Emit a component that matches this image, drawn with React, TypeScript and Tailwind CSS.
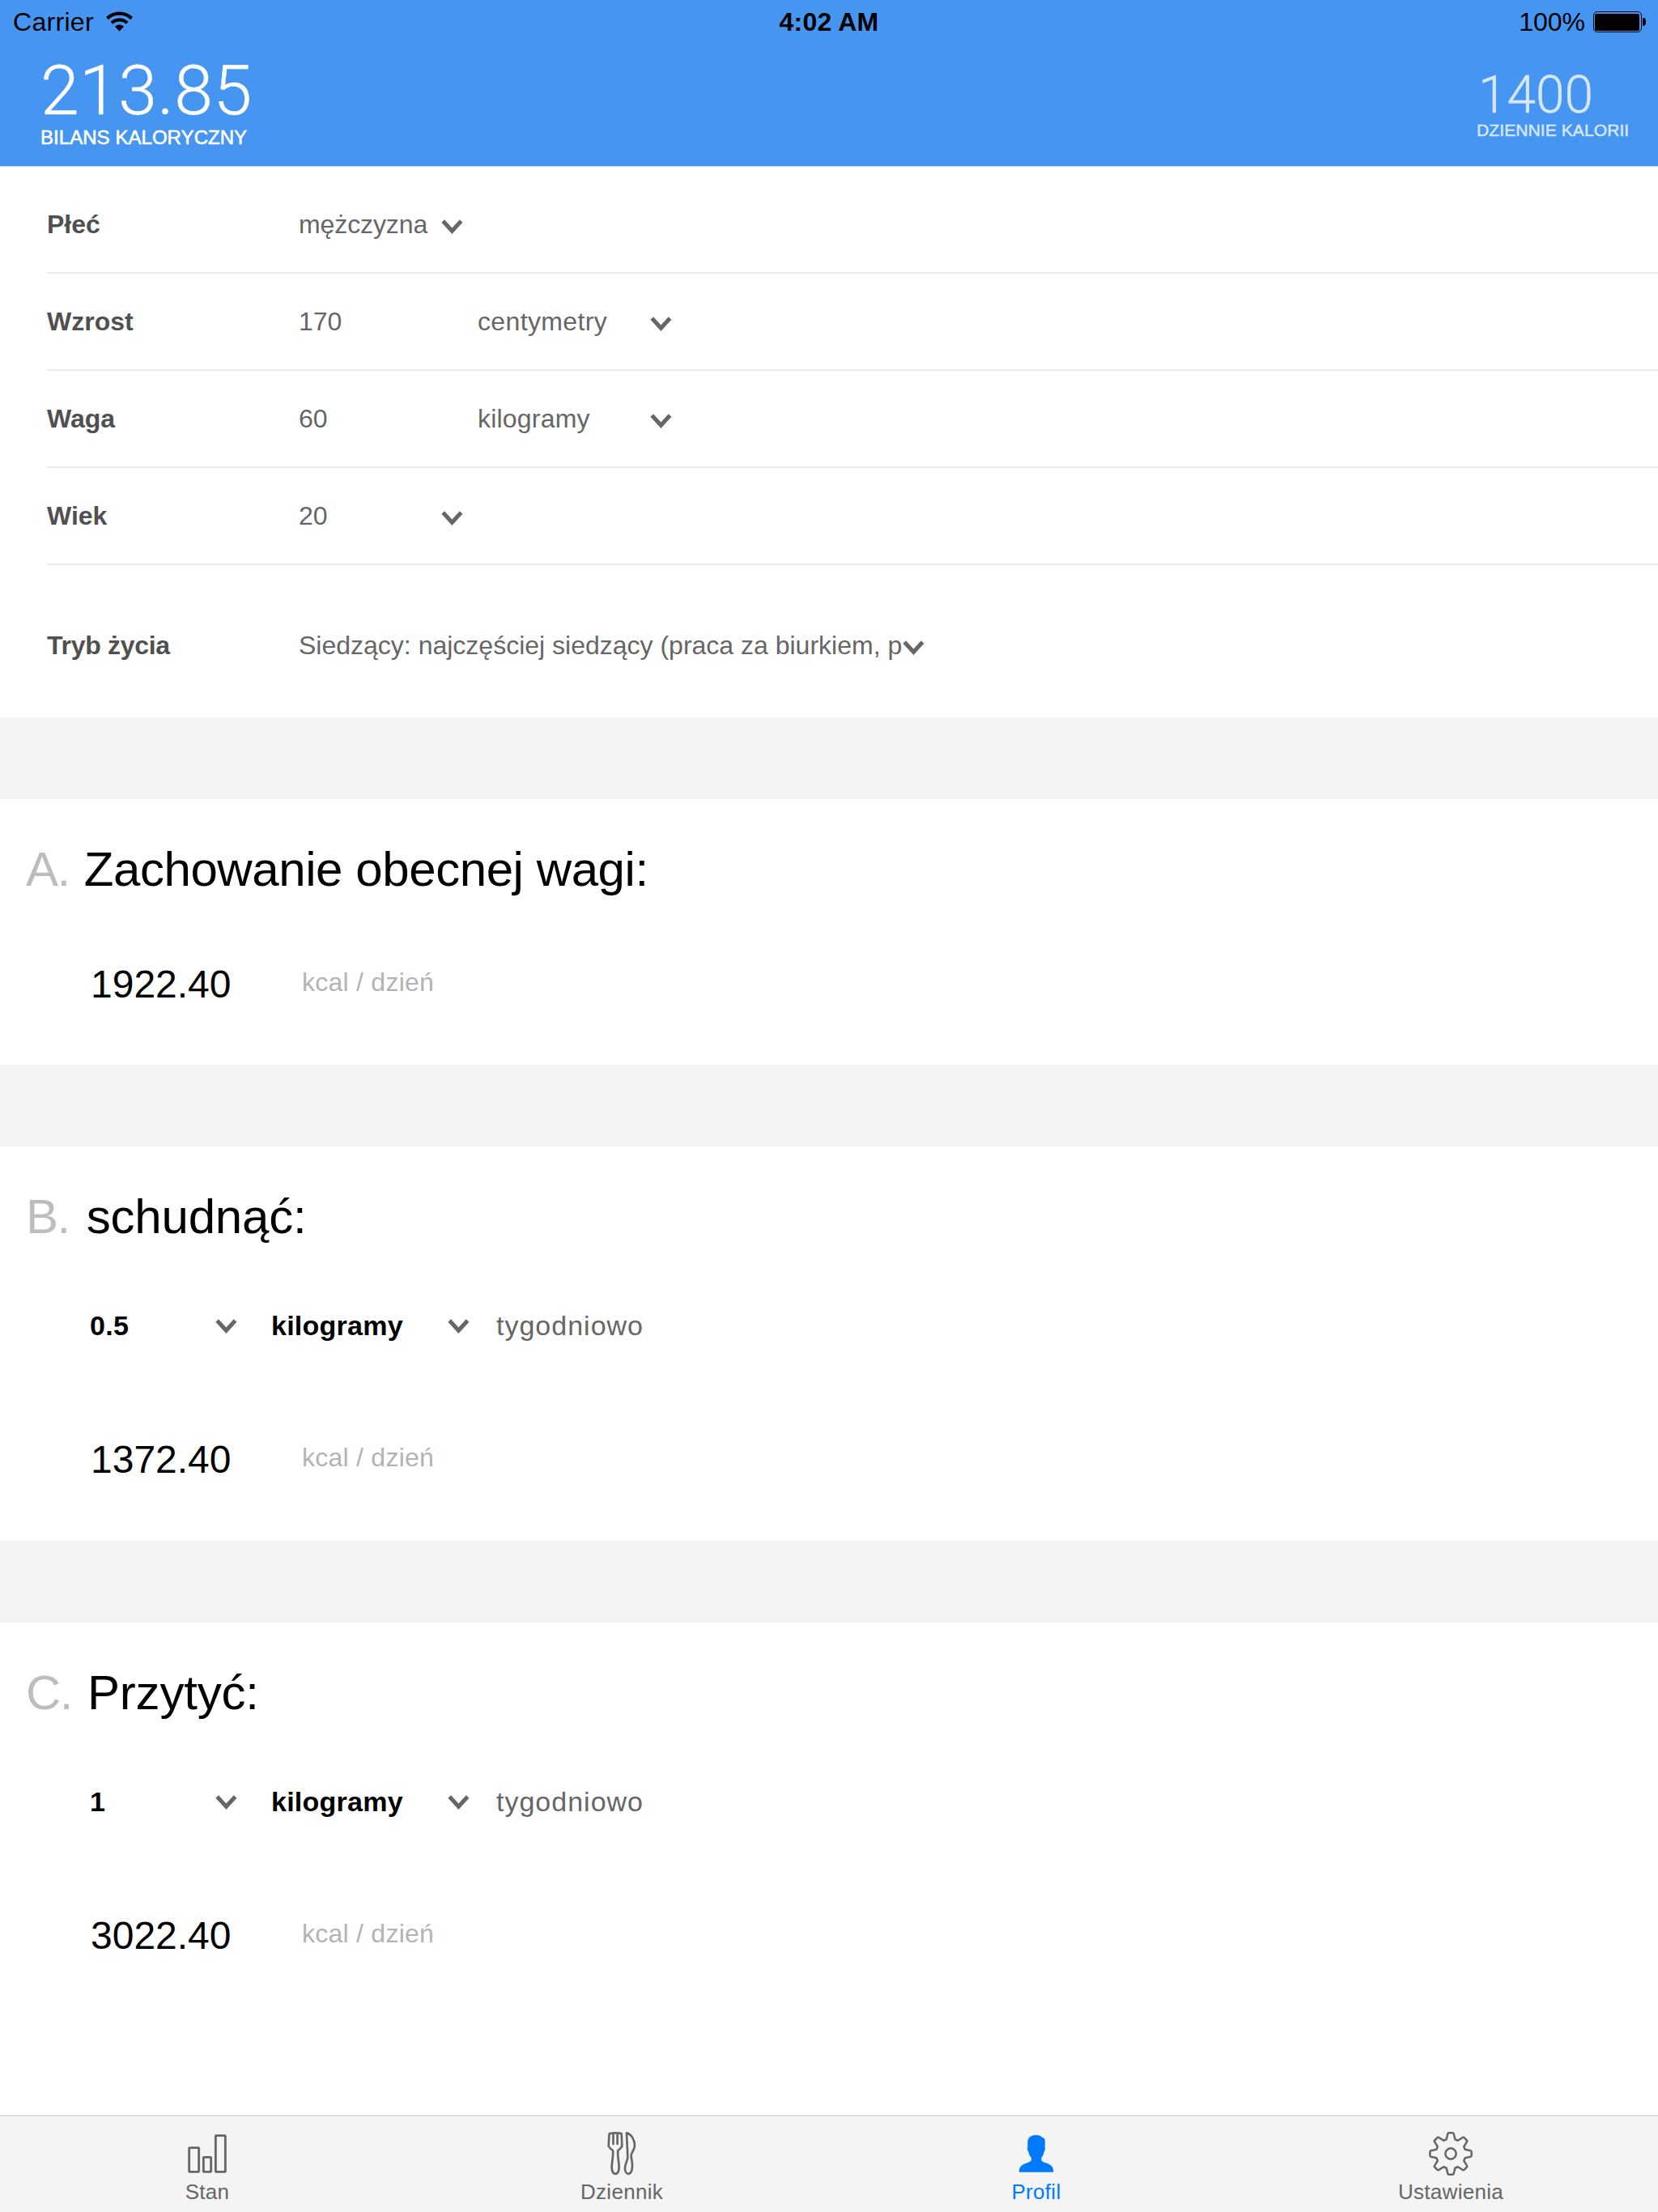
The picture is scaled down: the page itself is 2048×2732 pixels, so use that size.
import type { ReactNode } from "react";

function Chevron({ className = "mt-[14px]" }: { className?: string }) {
  return (
    <svg className={`h-[18px] w-[27px] shrink-0 ${className}`} viewBox="0 0 27 18" fill="none">
      <path d="M2.2 2 L13.4 14.2 L24.6 2" stroke="#666" strokeWidth="5" />
    </svg>
  );
}

function StatusBar() {
  return (
    <div className="flex h-[47px] justify-between pt-[7px] text-[32px] leading-[40px] text-black">
      <div className="flex w-[400px] pl-4">
        <span className="w-[115px] tracking-[0.3px]">Carrier</span>
        <svg className="mt-[7px] h-[25px] w-[33px]" viewBox="0 0 33 25">
          <g fill="none" stroke="#000" strokeWidth="4.2">
            <path d="M1.4 8.6 A22 22 0 0 1 31.6 8.6" />
            <path d="M7 14.2 A14 14 0 0 1 26 14.2" />
          </g>
          <path d="M16.5 24.5 L11 18.8 Q16.5 14.4 22 18.8 Z" />
        </svg>
      </div>
      <div className="font-bold tracking-[0.2px]">4:02 AM</div>
      <div className="flex w-[400px] justify-end pr-[15px]">
        <span>100%</span>
        <div className="mt-[7px] ml-[10px] h-[26px] w-[60px] rounded-[5px] border-[1.5px] border-black p-[1.5px]">
          <div className="h-full w-full rounded-[2px] bg-black" />
        </div>
        <div className="mt-[15px] ml-px h-[10px] w-[4px] rounded-r-full bg-black" />
      </div>
    </div>
  );
}

function Header() {
  return (
    <header className="h-[206px] border-b border-[#b9dbfb] bg-[#4595f1]">
      <StatusBar />
      <div className="flex justify-between pl-[50px] text-white">
        <div className="pt-[22px]">
          <div className="font-[Roboto,sans-serif] text-[86px] leading-[86px] font-light tracking-[0.4px] [-webkit-text-stroke:0.4px_white]">
            213.85
          </div>
          <div className="mt-px text-[24px] leading-[28px] tracking-[0.05px] [-webkit-text-stroke:0.6px_white]">
            BILANS KALORYCZNY
          </div>
        </div>
        <div className="w-[224px] pt-[39px] text-[#d6e7fc]">
          <div className="pl-[2px] font-[Roboto,sans-serif] text-[64px] leading-[64px] font-light [-webkit-text-stroke:0.4px_#d6e7fc]">
            1400
          </div>
          <div className="-mt-px text-[21px] leading-[24px] tracking-[0.1px] [-webkit-text-stroke:0.5px_#d6e7fc]">
            DZIENNIE KALORII
          </div>
        </div>
      </div>
    </header>
  );
}

function Row({ label, children, first = false }: { label: string; children: ReactNode; first?: boolean }) {
  return (
    <div className={`ml-[58px] flex items-end border-b-2 border-[#ebebeb] pb-[39px] ${first ? "h-[132px]" : "h-[120px]"}`}>
      <div className="flex">
        <div className="w-[311px] font-bold text-[#505050]">{label}</div>
        {children}
      </div>
    </div>
  );
}

function ProfileForm() {
  return (
    <section className="h-[680px] text-[32px] leading-[40px] text-[#666]">
      <Row label="Płeć" first>
        <span className="w-[176px] tracking-[-0.1px]">mężczyzna</span>
        <Chevron />
      </Row>
      <Row label="Wzrost">
        <span className="w-[221px]">170</span>
        <span className="w-[213px] tracking-[0.35px]">centymetry</span>
        <Chevron />
      </Row>
      <Row label="Waga">
        <span className="w-[221px]">60</span>
        <span className="w-[213px] tracking-[0.2px]">kilogramy</span>
        <Chevron />
      </Row>
      <Row label="Wiek">
        <span className="w-[176px]">20</span>
        <Chevron />
      </Row>
      <div className="ml-[58px] flex pt-[79px]">
        <div className="w-[311px] font-bold tracking-[-0.3px] text-[#505050]">Tryb życia</div>
        <span className="w-[746px] whitespace-nowrap">Siedzący: najczęściej siedzący (praca za biurkiem, p</span>
        <Chevron />
      </div>
    </section>
  );
}

type GoalProps = { letter: string; title: string; titleClass: string; amount?: string; kcal: string };

function Goal({ letter, title, titleClass, amount, kcal }: GoalProps) {
  return (
    <section className={`pt-[47px] ${amount ? "h-[487px]" : "h-[328px]"}`}>
      <h2 className="flex pl-[32px] text-[60px] leading-[80px] text-black">
        <span className="tracking-[-1.5px] text-[#bdbdbd]">{letter}.</span>
        <span className={titleClass}>{title}</span>
      </h2>
      {amount && (
        <div className="mt-[74px] flex pl-[111px] text-[34px] leading-[40px] text-black">
          <span className="w-[155px] font-bold tracking-[0.3px]">{amount}</span>
          <Chevron className="mt-[12px]" />
          <span className="ml-[42px] w-[218px] font-bold tracking-[0.25px]">kilogramy</span>
          <Chevron className="mt-[12px]" />
          <span className="ml-[33px] tracking-[1px] text-[#666]">tygodniowo</span>
        </div>
      )}
      <div className={`flex pl-[112px] ${amount ? "mt-[116px]" : "mt-[72px]"}`}>
        <span className="w-[261px] text-[48px] leading-[60px] text-black">{kcal}</span>
        <span className="mt-[7px] text-[32px] leading-[40px] tracking-[0.25px] text-[#b3b3b3]">kcal / dzień</span>
      </div>
    </section>
  );
}

const GEAR = (() => {
  const pts: string[] = [];
  for (let i = 0; i < 8; i++) {
    const c = (i * Math.PI) / 4 - Math.PI / 2;
    const at = (r: number, w: number) =>
      `${(Math.cos(c) * r - Math.sin(c) * w).toFixed(1)} ${(Math.sin(c) * r + Math.cos(c) * w).toFixed(1)}`;
    pts.push(
      `${i ? "L" : "M"}${at(53, -16)} L${at(74, -11)} Q${at(77, -10)} ${at(77, -7)} L${at(77, 7)} Q${at(77, 10)} ${at(74, 11)} L${at(53, 16)}`,
    );
  }
  return pts.join(" ") + "Z";
})();

function Tab({ label, viewBox, active = false, children }: { label: string; viewBox: string; active?: boolean; children: ReactNode }) {
  return (
    <div className={`flex flex-1 flex-col items-center pt-4 ${active ? "text-[#007aff]" : "text-[#666]"}`}>
      <svg
        className="h-[60px] w-[64px]"
        viewBox={viewBox}
        fill="none"
        stroke="currentColor"
        strokeWidth="8.5"
        strokeLinejoin="round"
        strokeLinecap="round"
      >
        {children}
      </svg>
      <span className="mt-[2px] text-[26px] leading-[30px] tracking-[0.3px]">{label}</span>
    </div>
  );
}

function TabBar() {
  return (
    <nav className="flex h-[120px] border-t-2 border-[#dcdcdc] bg-[#f4f4f4]">
      <Tab label="Stan" viewBox="72 90 192 180">
        <rect x="101" y="158" width="36" height="89" rx="2" />
        <rect x="154" y="193" width="28" height="54" rx="2" />
        <rect x="199" y="113" width="36" height="134" rx="2" />
      </Tab>
      <Tab label="Dziennik" viewBox="108 90 192 180">
        <path
          strokeWidth="8"
          d="M158 106 Q180 100 203 106 L205 150 Q204 158 190 168 C187 182 194 212 194 230 C193 263 168 263 167 230 C167 212 174 182 171 168 Q157 158 155 150 Z"
        />
        <path strokeWidth="8" d="M172.500 108 V144 M188 108 V144" />
        <path
          strokeWidth="8"
          d="M222 103 C240 107 252 130 252 150 C251 168 238 176 239 188 C240 206 245 214 243 230 C240 264 216 260 216 234 C216 212 228 208 226 188 Z"
        />
      </Tab>
      <Tab label="Profil" viewBox="114 90 192 180" active>
        <path
          stroke="none"
          fill="currentColor"
          d="M210 111 C220 111 227 114 232 119 C241 122 243 128 242.500 138 L242 156 C244 160 243 168 239 173 C237 183 233 190 229 195 V204 C233 212 245 213 256 218 C268 223 273 232 274 245 Q274 248 270 248 H150 Q146 248 146 245 C147 232 153 223 165 218 C176 213 189 211 192 204 V195 C187 190 183 182 181 173 C177 168 176 160 178 156 L178 137 C178 119 192 111 210 111 Z"
        />
      </Tab>
      <Tab label="Ustawienia" viewBox="150 90 192 180">
        <g transform="translate(246 180)" strokeWidth="7.5">
          <path d={GEAR} />
          <circle r="20" />
        </g>
      </Tab>
    </nav>
  );
}

export default function App() {
  return (
    <div className="flex h-[2732px] w-[2048px] flex-col overflow-hidden bg-white font-['Liberation_Sans',Arial,sans-serif]">
      <Header />
      <main className="flex-1">
        <ProfileForm />
        <div className="h-[101px] bg-[#f2f3f5]" />
        <Goal letter="A" title="Zachowanie obecnej wagi:" titleClass="ml-[18px] tracking-[-0.42px]" kcal="1922.40" />
        <div className="h-[101px] bg-[#f2f3f5]" />
        <Goal letter="B" title="schudnąć:" titleClass="ml-[21px] tracking-[-0.2px]" amount="0.5" kcal="1372.40" />
        <div className="h-[101px] bg-[#f2f3f5]" />
        <Goal letter="C" title="Przytyć:" titleClass="ml-[19px] tracking-[-0.2px]" amount="1" kcal="3022.40" />
      </main>
      <TabBar />
    </div>
  );
}
